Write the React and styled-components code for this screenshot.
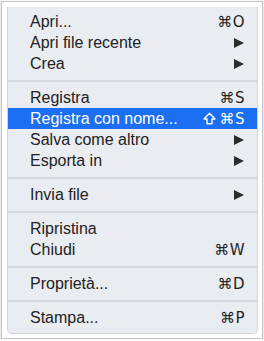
import React from 'react'
import styled, { createGlobalStyle } from 'styled-components'

const GlobalStyle = createGlobalStyle`
  html, body {
    margin: 0;
    padding: 0;
    background: #fff;
  }
  body {
    font-family: "Liberation Sans", Arial, sans-serif;
  }
`

const Frame = styled.div`
  box-sizing: border-box;
  width: 262px;
  height: 338px;
  margin: 1px 0 0 1px;
  padding: 5px 4px 4px 5px;
  background: #fff;
  border: 1px solid #c4c4c4;
  box-shadow: 0 1px 2px rgba(0, 0, 0, 0.25);
`

const Menu = styled.div`
  box-sizing: border-box;
  height: 100%;
  padding: 4px 0 5px;
  background: #e9ecf1;
  border: 1px solid #d2d4d8;
  border-top: none;
  border-radius: 0 0 5px 5px;
  display: flex;
  flex-direction: column;
`

const Row = styled.div`
  height: 21px;
  display: flex;
  align-items: center;
  padding: 0 12px 0 22px;
  font-size: 16px;
  color: ${p => (p.$active ? '#fff' : '#222')};
  background: ${p => (p.$active ? '#1c6ef2' : 'transparent')};
`

const Label = styled.span`
  flex: 1;
  white-space: nowrap;
`

const Shortcut = styled.span`
  display: flex;
  align-items: center;
  gap: 3px;
  font-family: "DejaVu Sans", "Liberation Sans", sans-serif;
  font-size: 15px;
  letter-spacing: 0.5px;
  color: inherit;
`

const Arrow = styled.span`
  width: 0;
  height: 0;
  margin-right: 1px;
  border-top: 5.5px solid transparent;
  border-bottom: 5.5px solid transparent;
  border-left: 10px solid #2c2c2c;
`

const Separator = styled.div`
  height: 13px;
  display: flex;
  align-items: center;
  &::after {
    content: '';
    flex: 1;
    height: 2px;
    background: #d6d9de;
  }
`

const ShiftIcon = () => (
  <svg width="13" height="13" viewBox="0 0 13 13" aria-hidden="true">
    <path
      d="M6.5 1.2 L12 7 H9 V11.8 H4 V7 H1 Z"
      fill="none"
      stroke="currentColor"
      strokeWidth="1.4"
      strokeLinejoin="round"
    />
  </svg>
)

const items = [
  { label: 'Apri...', key: '⌘O' },
  { label: 'Apri file recente', sub: true },
  { label: 'Crea', sub: true },
  null,
  { label: 'Registra', key: '⌘S' },
  { label: 'Registra con nome...', key: '⌘S', shift: true, active: true },
  { label: 'Salva come altro', sub: true },
  { label: 'Esporta in', sub: true },
  null,
  { label: 'Invia file', sub: true },
  null,
  { label: 'Ripristina' },
  { label: 'Chiudi', key: '⌘W' },
  null,
  { label: 'Proprietà...', key: '⌘D' },
  null,
  { label: 'Stampa...', key: '⌘P' },
]

export default function App() {
  return (
    <>
      <GlobalStyle />
      <Frame>
        <Menu>
          {items.map((it, i) =>
            it ? (
              <Row key={i} $active={it.active}>
                <Label>{it.label}</Label>
                {it.key && (
                  <Shortcut>
                    {it.shift && <ShiftIcon />}
                    <span>{it.key}</span>
                  </Shortcut>
                )}
                {it.sub && <Arrow />}
              </Row>
            ) : (
              <Separator key={i} />
            )
          )}
        </Menu>
      </Frame>
    </>
  )
}
